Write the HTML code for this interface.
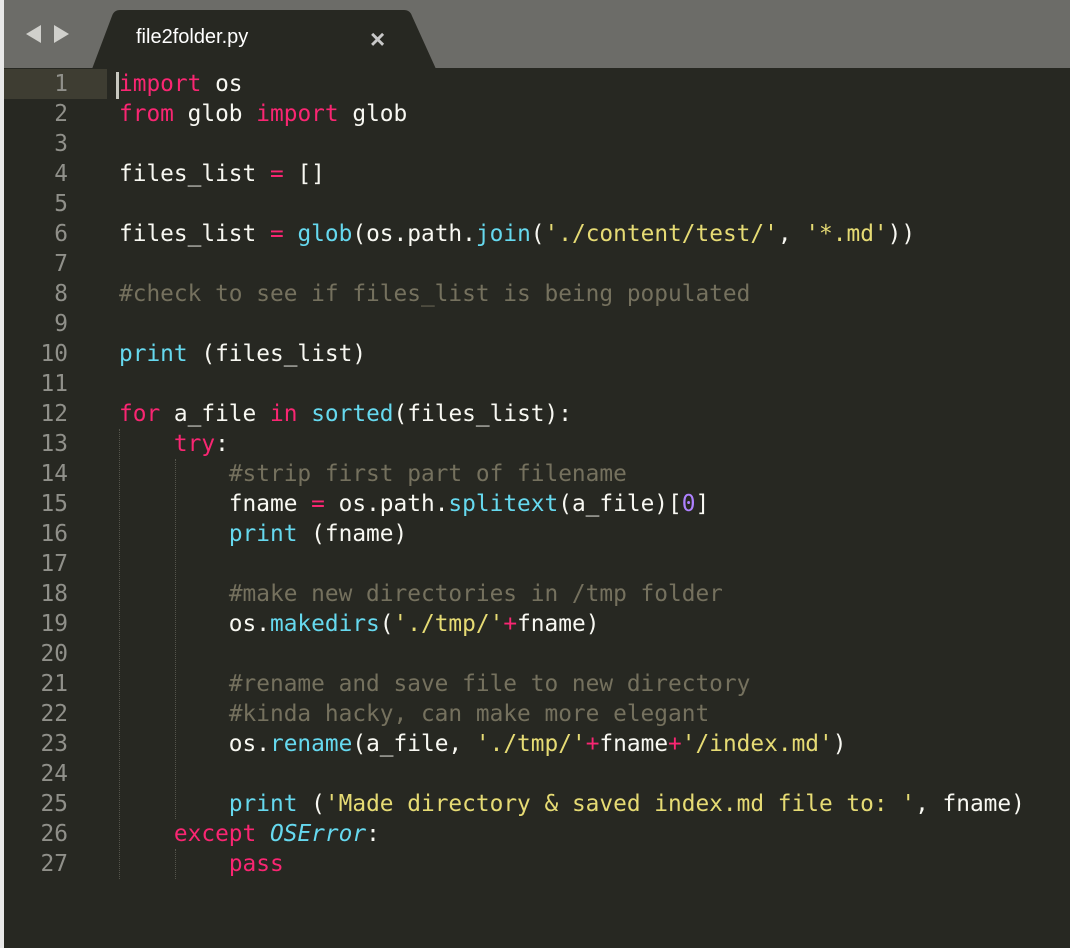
<!DOCTYPE html>
<html><head><meta charset="utf-8"><style>
html,body{margin:0;padding:0}
body{width:1070px;height:948px;background:#272822;position:relative;overflow:hidden;font-family:"DejaVu Sans Mono","Liberation Mono",monospace}
.strip{position:absolute;left:0;top:0;width:4px;height:948px;background:#e8e8e8;z-index:5}
.bar{position:absolute;left:0;top:0;width:1070px;height:68px;background:#6c6c68}
.tab{position:absolute;left:92px;top:10px;width:344px;height:58px}
.tabtitle{position:absolute;left:136px;top:26px;color:#fff;font-family:"Liberation Sans",sans-serif;font-size:20px}
.x{position:absolute;left:370px;top:24px;color:#c8c8c8;font-family:"Liberation Sans",sans-serif;font-size:26px;font-weight:bold}
.hl{position:absolute;left:4px;top:69px;width:103px;height:30px;background:#3e3d32}
.cursor{position:absolute;left:116px;top:72px;width:3px;height:27px;background:#c8c8c0}
.code{position:absolute;left:0;top:69px;font-size:22.8px;line-height:30px;color:#f8f8f2;white-space:pre}
.ln{display:inline-block;width:68px;text-align:right;color:#90908a;margin-right:51px}
.guide{position:absolute;width:0;border-left:1px dotted #55554c}
.k{color:#f92672}.f{color:#66d9ef}.s{color:#e6db74}.c{color:#75715e}.n{color:#ae81ff}.i{color:#66d9ef;font-style:italic}
</style></head><body>
<div class="strip"></div>
<div class="bar"></div>
<svg style="position:absolute;left:0;top:0" width="1070" height="70">
<path d="M92 69 L112 16 Q114 10 120 10 L404 10 Q410 10 412 16 L436 69 Z" fill="#272822"/>
<path d="M26 34 L41 25 L41 43 Z" fill="#d0d0cc"/>
<path d="M69 34 L54 25 L54 43 Z" fill="#d0d0cc"/>
</svg>
<div class="tabtitle">file2folder.py</div>
<div class="x">×</div>
<div class="hl"></div>
<div class="guide" style="left:119px;top:429px;height:450px"></div>
<div class="guide" style="left:175px;top:459px;height:360px"></div>
<div class="guide" style="left:175px;top:849px;height:30px"></div>
<div class="code"><span class="ln">1</span><span class="k">import</span> os
<span class="ln">2</span><span class="k">from</span> glob <span class="k">import</span> glob
<span class="ln">3</span>
<span class="ln">4</span>files_list <span class="k">=</span> []
<span class="ln">5</span>
<span class="ln">6</span>files_list <span class="k">=</span> <span class="f">glob</span>(os.path.<span class="f">join</span>(<span class="s">'./content/test/'</span>, <span class="s">'*.md'</span>))
<span class="ln">7</span>
<span class="ln">8</span><span class="c">#check to see if files_list is being populated</span>
<span class="ln">9</span>
<span class="ln">10</span><span class="f">print</span> (files_list)
<span class="ln">11</span>
<span class="ln">12</span><span class="k">for</span> a_file <span class="k">in</span> <span class="f">sorted</span>(files_list):
<span class="ln">13</span>    <span class="k">try</span>:
<span class="ln">14</span>        <span class="c">#strip first part of filename</span>
<span class="ln">15</span>        fname <span class="k">=</span> os.path.<span class="f">splitext</span>(a_file)[<span class="n">0</span>]
<span class="ln">16</span>        <span class="f">print</span> (fname)
<span class="ln">17</span>
<span class="ln">18</span>        <span class="c">#make new directories in /tmp folder</span>
<span class="ln">19</span>        os.<span class="f">makedirs</span>(<span class="s">'./tmp/'</span><span class="k">+</span>fname)
<span class="ln">20</span>
<span class="ln">21</span>        <span class="c">#rename and save file to new directory</span>
<span class="ln">22</span>        <span class="c">#kinda hacky, can make more elegant</span>
<span class="ln">23</span>        os.<span class="f">rename</span>(a_file, <span class="s">'./tmp/'</span><span class="k">+</span>fname<span class="k">+</span><span class="s">'/index.md'</span>)
<span class="ln">24</span>
<span class="ln">25</span>        <span class="f">print</span> (<span class="s">'Made directory &amp; saved index.md file to: '</span>, fname)
<span class="ln">26</span>    <span class="k">except</span> <span class="i">OSError</span>:
<span class="ln">27</span>        <span class="k">pass</span></div>
<div class="cursor"></div>
</body></html>
